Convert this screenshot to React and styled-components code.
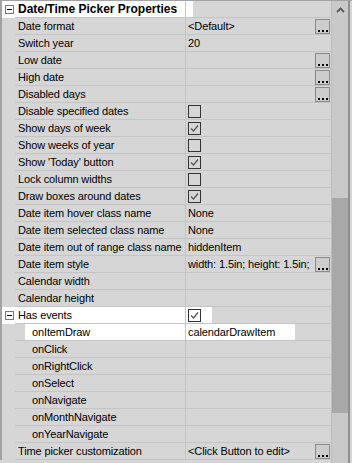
import React from 'react';
import styled, { createGlobalStyle } from 'styled-components';

const GlobalStyle = createGlobalStyle`
  html, body {
    margin: 0;
    padding: 0;
    background: #d6d6d6;
  }
  body {
    font-family: "Liberation Sans", Arial, sans-serif;
    font-size: 11px;
    color: #000;
  }
`;

const BASE = '#d6d6d6';

const rows = [
  { name: 'Date/Time Picker Properties', header: true, toggle: true, hl: [2, 193] },
  { name: 'Date format', value: '<Default>', button: true },
  { name: 'Switch year', value: '20' },
  { name: 'Low date', button: true },
  { name: 'High date', button: true },
  { name: 'Disabled days', button: true },
  { name: 'Disable specified dates', check: false },
  { name: 'Show days of week', check: true },
  { name: 'Show weeks of year', check: false },
  { name: "Show 'Today' button", check: true },
  { name: 'Lock column widths', check: false },
  { name: 'Draw boxes around dates', check: true },
  { name: 'Date item hover class name', value: 'None' },
  { name: 'Date item selected class name', value: 'None' },
  { name: 'Date item out of range class name', value: 'hiddenItem' },
  { name: 'Date item style', value: 'width: 1.5in; height: 1.5in;', button: true },
  { name: 'Calendar width' },
  { name: 'Calendar height' },
  { name: 'Has events', toggle: true, check: true, hl: [2, 212] },
  { name: 'onItemDraw', sub: true, value: 'calendarDrawItem', hl: [25, 295] },
  { name: 'onClick', sub: true },
  { name: 'onRightClick', sub: true },
  { name: 'onSelect', sub: true },
  { name: 'onNavigate', sub: true },
  { name: 'onMonthNavigate', sub: true },
  { name: 'onYearNavigate', sub: true },
  { name: 'Time picker customization', value: '<Click Button to edit>', button: true },
];

const Frame = styled.div`
  display: flex;
  width: 352px;
  height: 463px;
  box-sizing: border-box;
  border-top: 1px solid #a3a3a3;
  background: ${BASE};
  overflow: hidden;
`;

const Grid = styled.div`
  flex: 1;
  display: flex;
  flex-direction: column;
  min-width: 0;
`;

const Row = styled.div`
  display: flex;
  height: 17px;
  background: ${({ $hl }) =>
    $hl
      ? `linear-gradient(to right, ${BASE} ${$hl[0]}px, #fff ${$hl[0]}px ${$hl[1]}px, ${BASE} ${$hl[1]}px)`
      : BASE};
`;

const Gutter = styled.div`
  width: 13px;
  flex: none;
  border-left: 2px solid #a3a3a3;
  display: flex;
  align-items: center;
  justify-content: center;
`;

const Toggle = styled.span`
  width: 7px;
  height: 7px;
  border: 1px solid #7a7a7a;
  background: #fff;
  position: relative;
  margin-left: 1px;
  &::after {
    content: '';
    position: absolute;
    left: 1px;
    right: 1px;
    top: 3px;
    height: 1px;
    background: #000;
  }
`;

const Cells = styled.div`
  flex: 1;
  display: flex;
  border-bottom: 1px solid #c4c4c4;
  min-width: 0;
`;

const NameCell = styled.div`
  width: 171px;
  flex: none;
  box-sizing: border-box;
  padding: 1px 0 0 ${({ $sub }) => ($sub ? 17 : 3)}px;
  border-right: 1px solid #c4c4c4;
  line-height: 15px;
  white-space: nowrap;
  overflow: hidden;
  font-weight: ${({ $header }) => ($header ? 700 : 400)};
  font-size: ${({ $header }) => ($header ? '12px' : '11px')};
  letter-spacing: ${({ $header }) => ($header ? '0' : '-0.12px')};
`;

const ValueCell = styled.div`
  flex: 1;
  display: flex;
  align-items: center;
  justify-content: space-between;
  padding: 0 1px 0 2px;
  min-width: 0;
`;

const ValueText = styled.span`
  padding-top: 1px;
  line-height: 15px;
  white-space: nowrap;
  letter-spacing: -0.12px;
`;

const Box = styled.span`
  width: 11px;
  height: 11px;
  border: 1px solid #333;
  display: inline-flex;
  align-items: center;
  justify-content: center;
`;

const DotsButton = styled.span`
  width: 13px;
  height: 12px;
  flex: none;
  margin-left: auto;
  border: 1px solid #8a8a8a;
  background: #cdcdcd;
  display: flex;
  align-items: flex-end;
  justify-content: center;
  gap: 2px;
  padding-bottom: 1px;
  box-sizing: content-box;
  & > i {
    width: 2px;
    height: 2px;
    background: #000;
  }
`;

const Scrollbar = styled.div`
  width: 16px;
  flex: none;
  background: #c9c9c9;
  border-left: 1px solid #bdbdbd;
  border-right: 2px solid #8e8e8e;
  margin-right: 2px;
  display: flex;
  flex-direction: column;
`;

const ArrowBox = styled.div`
  height: 17px;
  display: flex;
  align-items: center;
  justify-content: center;
`;

const Thumb = styled.div`
  background: #a8a8a8;
`;

const Checkbox = ({ checked }) => (
  <Box>
    {checked && (
      <svg width="9" height="9" viewBox="0 0 9 9">
        <path d="M1 4.5 L3.5 7 L8 1.5" fill="none" stroke="#555" strokeWidth="1.2" />
      </svg>
    )}
  </Box>
);

const Dots = () => (
  <DotsButton>
    <i />
    <i />
    <i />
  </DotsButton>
);

const App = () => {
  const thumb = { top: 198, height: 215 };
  return (
    <>
      <GlobalStyle />
      <Frame>
        <Grid>
          {rows.map((r) => (
            <Row key={r.name} $hl={r.hl}>
              <Gutter>{r.toggle && <Toggle />}</Gutter>
              <Cells>
                <NameCell $sub={r.sub} $header={r.header}>
                  {r.name}
                </NameCell>
                <ValueCell>
                  {r.check !== undefined && <Checkbox checked={r.check} />}
                  {r.value && <ValueText>{r.value}</ValueText>}
                  {r.button && <Dots />}
                </ValueCell>
              </Cells>
            </Row>
          ))}
        </Grid>
        <Scrollbar>
          <ArrowBox>
            <svg width="9" height="6" viewBox="0 0 9 6">
              <path d="M1 5 L4.5 1.5 L8 5" fill="none" stroke="#5a5a5a" strokeWidth="1.8" />
            </svg>
          </ArrowBox>
          <Thumb style={{ marginTop: thumb.top - 18, height: thumb.height }} />
        </Scrollbar>
      </Frame>
    </>
  );
};

export default App;
